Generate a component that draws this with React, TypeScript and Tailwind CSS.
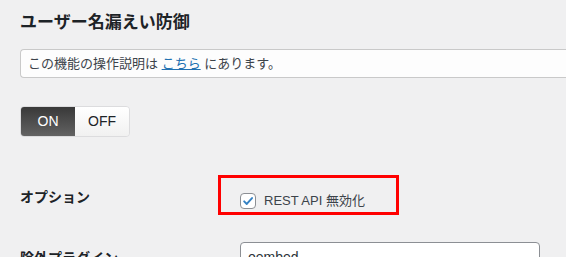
import React from "react";

const font = { fontFamily: '"Liberation Sans", "Noto Sans CJK JP", sans-serif' };

const CheckIcon = () => (
    <svg viewBox="0 0 16 16" className="w-[16px] h-[16px]">
        <path d="M3.6 8.4 L6.6 11.4 L12.6 4.6" fill="none" stroke="#3582c4" strokeWidth="2.2" strokeLinecap="round" strokeLinejoin="round" />
    </svg>
);

const App: React.FC = () => {
    return (
        <div className="w-[566px] h-[257px] overflow-hidden bg-[#f0f0f1] text-[#1d2327] pl-[20px]" style={font}>
            <h2 className="pt-[11px] text-[17px] leading-[24px] font-bold">ユーザー名漏えい防御</h2>

            <div className="mt-[14px] h-[29px] flex items-center bg-[#fdfdfd] border border-[#c9c9c9] border-r-0 rounded-l-[4px] pl-[7px] text-[13px] text-[#3c434a]">
                この機能の操作説明は&nbsp;<a className="text-[#2271b1] underline">こちら</a>&nbsp;にあります。
            </div>

            <div className="mt-[28px] flex w-[110px] h-[31px] rounded-[4px] overflow-hidden border border-[#dcdcde] text-[14px]">
                <div className="w-[54px] flex items-center justify-center text-white bg-gradient-to-b from-[#393939] to-[#636363]">ON</div>
                <div className="flex-1 flex items-center justify-center bg-gradient-to-b from-white to-[#f1f1f1]">OFF</div>
            </div>

            <div className="mt-[38px] grid grid-cols-[198px_1fr]">
                <div className="pt-[12px] text-[14px] leading-[20px] font-semibold">オプション</div>
                <div>
                    <div className="w-[181px] h-[40px] border-[3px] border-[#ff0000] pl-[19px] pt-[13px]">
                        <label className="flex items-center gap-[8px] text-[13px] text-[#3c434a]">
                            <span className="w-[16px] h-[16px] bg-white border border-[#8c8f94] rounded-[4px] flex items-center justify-center">
                                <CheckIcon />
                            </span>
                            REST API 無効化
                        </label>
                    </div>
                </div>

                <div className="mt-[27px] pt-[6px] text-[14px] leading-[20px] font-semibold">除外プラグイン</div>
                <div className="mt-[27px] pl-[22px]">
                    <div className="w-[300px] h-[30px] bg-white border border-[#8c8f94] rounded-[4px] px-[7px] flex items-center text-[14px] text-[#2c3338]">
                        oembed
                    </div>
                </div>
            </div>
        </div>
    );
};

export default App;
